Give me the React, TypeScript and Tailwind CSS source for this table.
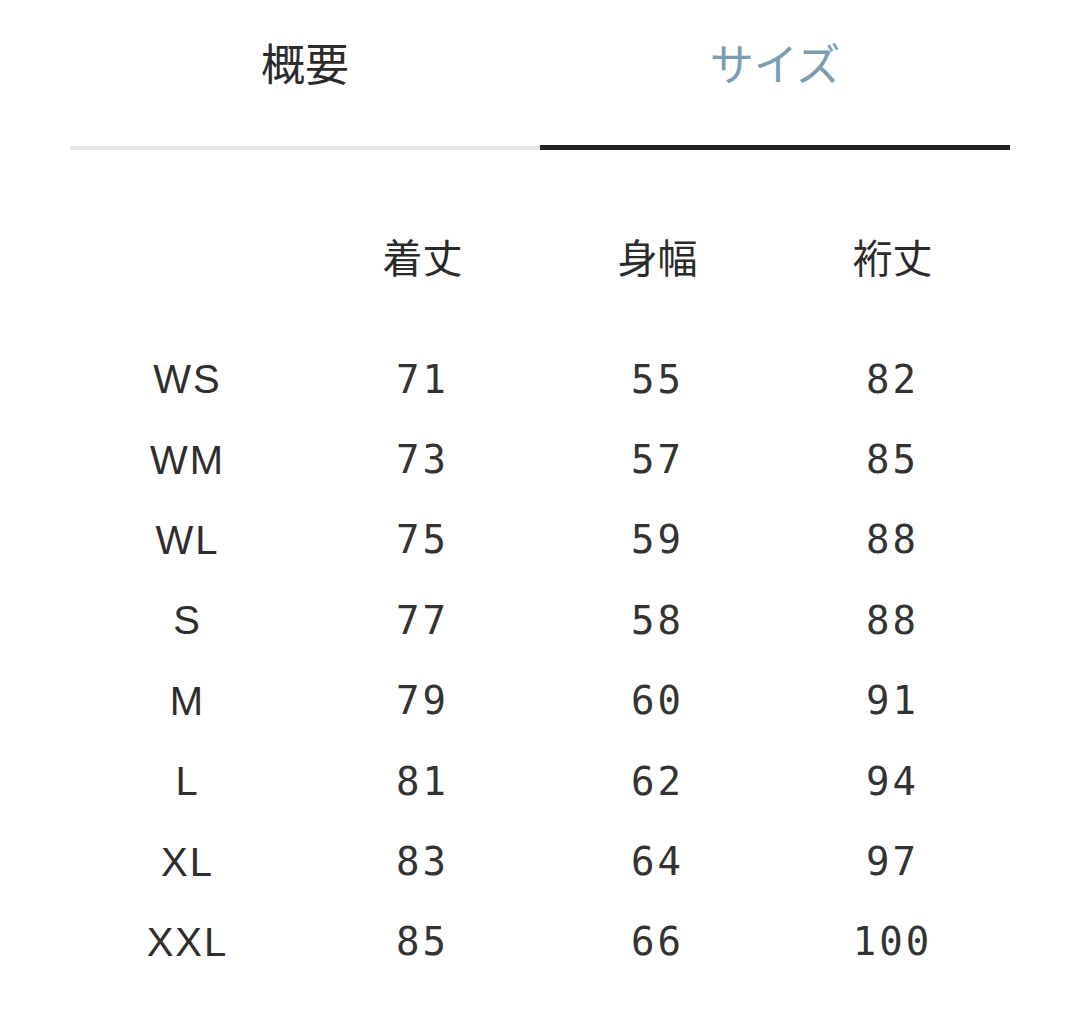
import React from "react";

const rows: [string, string, string, string][] = [
  ["WS", "71", "55", "82"],
  ["WM", "73", "57", "85"],
  ["WL", "75", "59", "88"],
  ["S", "77", "58", "88"],
  ["M", "79", "60", "91"],
  ["L", "81", "62", "94"],
  ["XL", "83", "64", "97"],
  ["XXL", "85", "66", "100"],
];

const jp = "font-['Noto_Sans_CJK_JP','Noto_Sans',sans-serif]";
const num = "font-['DejaVu_Sans_Mono',monospace] text-[39px] tracking-[3px] text-[#333333]";
const lab = "font-['Liberation_Sans',Arial,sans-serif] text-[40px] tracking-[2px] text-[#2e2e2e]";

export default function App() {
  return (
    <div className="w-[1080px] h-[1020px] bg-white overflow-hidden">
      <div className="mx-[70px] w-[940px]">
        <div className="flex h-[124px]">
          <div className={`flex-1 flex items-center justify-center text-[44px] leading-none text-[#2b2b2b] ${jp}`}>
            概要
          </div>
          <div className={`flex-1 flex items-center justify-center text-[44px] leading-none text-[#7b9db3] ${jp}`}>
            サイズ
          </div>
        </div>
        <div className="flex items-end mt-[21px] h-[5px]">
          <div className="flex-1 h-[4px] bg-[#e6e6e6]" />
          <div className="flex-1 h-[5px] bg-[#222222]" />
        </div>

        <div className="mt-[66px] grid grid-cols-4 h-[80px] items-center text-center">
          <div />
          <div className={`text-[40px] leading-none text-[#2b2b2b] ${jp}`}>着丈</div>
          <div className={`text-[40px] leading-none text-[#2b2b2b] ${jp}`}>身幅</div>
          <div className={`text-[40px] leading-none text-[#2b2b2b] ${jp}`}>裄丈</div>
        </div>

        <div className="mt-[43px]">
          {rows.map((r) => (
            <div key={r[0]} className="grid grid-cols-4 h-[80.4px] items-center text-center">
              <div className={`leading-none ${lab}`}>{r[0]}</div>
              <div className={`leading-none ${num}`}>{r[1]}</div>
              <div className={`leading-none ${num}`}>{r[2]}</div>
              <div className={`leading-none ${num}`}>{r[3]}</div>
            </div>
          ))}
        </div>
      </div>
    </div>
  );
}
